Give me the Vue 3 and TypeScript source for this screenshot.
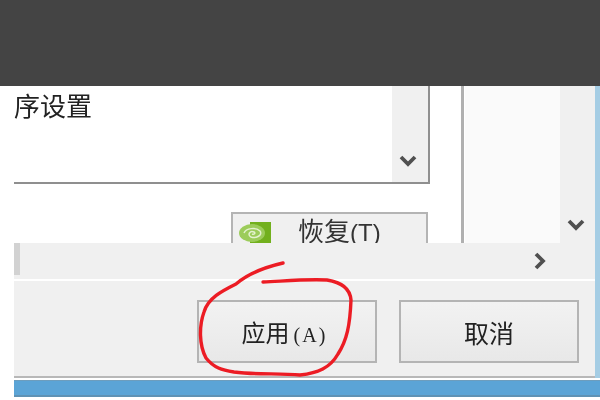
<script setup lang="ts">
const circlePath =
  'M283 263 C270 266 250 272 236 284 C222 291 208 298 204 312 C199 326 199 345 206 358 C214 368 222 370 234 372 C255 375 280 373 300 375 C318 373 330 368 338 354 C347 340 350 325 351 300 C350 288 340 282 327 280 C305 279 285 281 263 282'
</script>

<template>
  <div class="page">
    <div class="topbar"></div>
    <div class="window">
      <div class="content">
        <div class="main">
          <div class="left">
            <div class="listbox">
              <div class="list-text">序设置</div>
              <div class="vscroll small">
                <svg class="chev" width="18" height="14" viewBox="0 0 18 14">
                  <path d="M2 3 L9 10 L16 3" />
                </svg>
              </div>
            </div>
            <div class="restore-row">
              <div class="restore">
                <svg class="nv" width="33" height="22" viewBox="0 0 33 22">
                  <path class="nv-bg" d="M12 0 H33 V22 H12 Z" />
                  <ellipse class="nv-eye" cx="14" cy="11" rx="13" ry="9" />
                  <path class="nv-ring" d="M6 11 C8 6 18 5 22 9 C25 13 18 17 13 15 C9 13 12 8 16 10 C18 11 16 13 14 12" />
                </svg>
                <span class="restore-label">恢复<span class="latin">(T)</span></span>
              </div>
            </div>
          </div>
          <div class="divider"></div>
          <div class="right-panel"></div>
          <div class="vscroll large">
            <svg class="chev" width="18" height="14" viewBox="0 0 18 14">
              <path d="M2 3 L9 10 L16 3" />
            </svg>
          </div>
        </div>
        <div class="hscroll">
          <div class="thumb"></div>
          <svg class="chev" width="14" height="18" viewBox="0 0 14 18">
            <path d="M3 2 L10 9 L3 16" />
          </svg>
        </div>
        <div class="footer">
          <button class="btn apply" type="button">应用<span class="mono">(A)</span></button>
          <button class="btn" type="button">取消</button>
        </div>
      </div>
    </div>
    <div class="bluebar"></div>

    <svg class="circle" width="600" height="400" viewBox="0 0 600 400">
      <path :d="circlePath" />
    </svg>
  </div>
</template>

<style scoped>
.page {
  position: relative;
  width: 600px;
  height: 400px;
  overflow: hidden;
  background: #fff;
  display: flex;
  flex-direction: column;
  font-family: "Noto Sans CJK SC", "Liberation Sans", sans-serif;
  color: #333;
  filter: blur(0.5px);
}
.topbar {
  height: 86px;
  background: #444;
  flex: none;
}
.window {
  height: 292px;
  flex: none;
  padding-left: 14px;
  display: flex;
}
.content {
  width: 581px;
  border-right: 5px solid #a5cde4;
  display: flex;
  flex-direction: column;
}
.main {
  height: 157px;
  flex: none;
  display: flex;
}
.left {
  width: 416px;
  flex: none;
  display: flex;
  flex-direction: column;
}
.listbox {
  height: 96px;
  flex: none;
  display: flex;
  justify-content: space-between;
  border-right: 2px solid #8f8f8f;
  border-bottom: 2px solid #8f8f8f;
}
.list-text {
  font-size: 26px;
  line-height: 38px;
  color: #222;
}
.vscroll {
  background: #f0f0f0;
  display: flex;
  flex-direction: column;
  justify-content: flex-end;
  align-items: center;
}
.vscroll.small {
  width: 36px;
  box-sizing: border-box;
  padding: 0 4px 14px 0;
}
.vscroll.large {
  width: 35px;
  box-sizing: border-box;
  padding: 0 3px 11px 0;
}
.chev {
  display: block;
  flex: none;
}
.chev path {
  fill: none;
  stroke: #505050;
  stroke-width: 3.8;
}
.restore-row {
  display: flex;
  justify-content: flex-end;
  padding: 28px 2px 0 0;
}
.restore {
  width: 197px;
  height: 33px;
  flex: none;
  box-sizing: border-box;
  border: 2px solid #b4b4b4;
  border-bottom: none;
  background: #f0f0f0;
  display: flex;
  align-items: flex-start;
  padding: 8px 0 0 5px;
}
.nv {
  display: block;
  flex: none;
}
.nv-bg {
  fill: #72b01d;
}
.nv-eye {
  fill: #9ccc5a;
}
.nv-ring {
  fill: none;
  stroke: #e4f2cf;
  stroke-width: 1.5;
}
.restore-label {
  margin: -4px 0 0 27px;
  font-size: 26px;
  line-height: 24px;
  white-space: nowrap;
  color: #333;
}
.latin {
  font-family: "Liberation Sans", sans-serif;
  font-size: 24px;
}
.divider {
  width: 3px;
  flex: none;
  margin-left: 31px;
  background: #b0b0b0;
}
.right-panel {
  width: 95px;
  flex: none;
  margin-left: 1px;
  background: #fafafa;
}
.hscroll {
  height: 36px;
  flex: none;
  background: #f0f0f0;
  display: flex;
  align-items: center;
  justify-content: space-between;
  padding-right: 48px;
}
.thumb {
  width: 6px;
  height: 32px;
  align-self: flex-start;
  background: #d2d2d2;
}
.footer {
  flex: 1;
  margin-top: 2px;
  background: #f0f0f0;
  border-bottom: 2px solid #b8b8b8;
  display: flex;
  align-items: flex-start;
  gap: 22px;
  padding: 19px 0 0 183px;
}
.btn {
  width: 180px;
  height: 63px;
  box-sizing: border-box;
  padding: 0;
  border: 2px solid #b4b4b4;
  background: linear-gradient(#f2f2f2, #e8e8e8);
  font-family: inherit;
  font-size: 25px;
  color: #222;
}
.apply {
  font-size: 24px;
  padding-right: 5px;
}
.mono {
  font-family: "Liberation Serif", serif;
  font-size: 20px;
  letter-spacing: 2px;
  margin-left: 4px;
}
.bluebar {
  height: 17px;
  flex: none;
  margin-left: 14px;
  margin-top: 2px;
  background: #5ba4d6;
  border-top: 1px solid #6d9dbd;
  border-bottom: 2px solid #5f92b4;
  box-sizing: border-box;
}
.circle {
  position: absolute;
  left: 0;
  top: 0;
}
.circle path {
  fill: none;
  stroke: #ec1c24;
  stroke-width: 3.4;
  stroke-linecap: round;
}
</style>
